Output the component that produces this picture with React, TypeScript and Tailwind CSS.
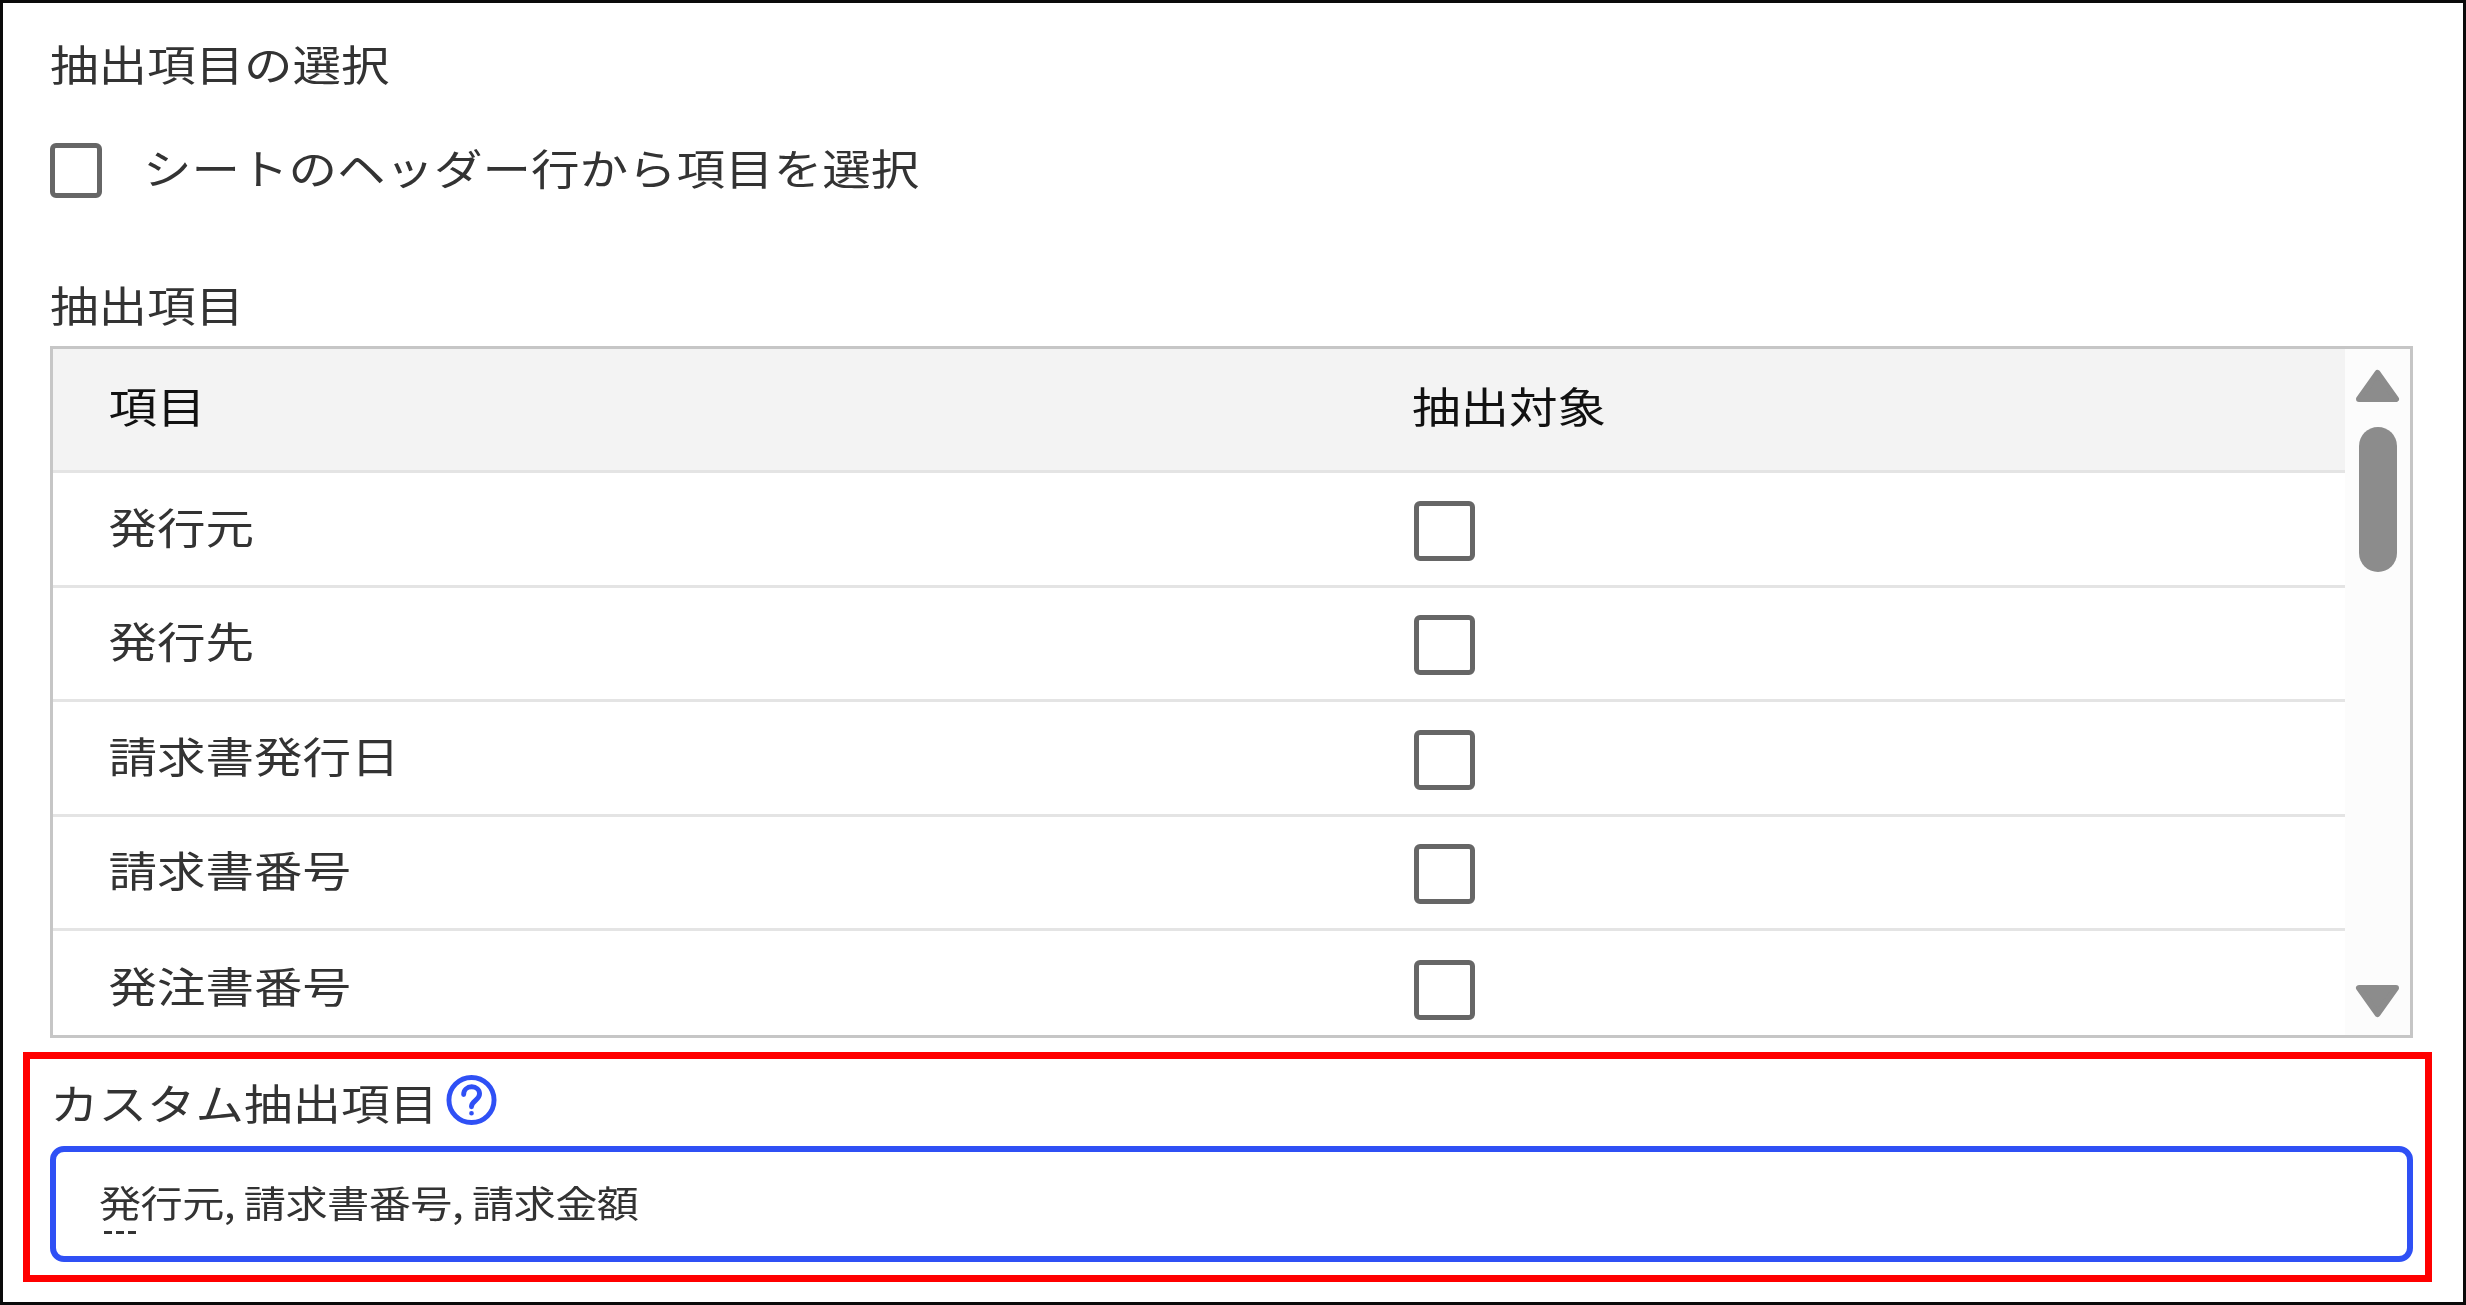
import React from 'react';

const rows = ['発行元', '発行先', '請求書発行日', '請求書番号', '発注書番号'];

const Label: React.FC<{ children: React.ReactNode; className?: string }> = ({ children, className = '' }) => (
  <span className={`inline-block origin-left scale-x-[1.155] whitespace-nowrap text-[42px] leading-[60px] blur-[0.4px] ${className}`}>
    {children}
  </span>
);

const Box: React.FC<{ className?: string }> = ({ className = '' }) => (
  <div className={`rounded-[6px] border-[5px] border-[#666666] bg-white ${className}`} />
);

const App: React.FC = () => {
  return (
    <div className="flex h-[1305px] w-[2466px] flex-col border-[3px] border-[#0a0a0a] bg-white pl-[47px] pr-[50px] pt-[30px] font-['Noto_Sans_CJK_JP','Noto_Sans',sans-serif] text-[#333333]">
      <Label className="self-start">抽出項目の選択</Label>

      <div className="mt-[49px] flex h-[56px] items-center">
        <Box className="h-[55px] w-[52px] shrink-0" />
        <Label className="ml-[41px] -translate-y-[3px]">シートのヘッダー行から項目を選択</Label>
      </div>

      <Label className="mt-[76px] self-start">抽出項目</Label>

      <div className="mt-[12px] flex h-[692px] overflow-hidden border-[3px] border-[#c6c6c6]">
        <div className="min-w-0 flex-1">
          <div className="grid h-[124px] grid-cols-[1359px_1fr] items-center border-b-[3px] border-[#e4e4e4] bg-[#f3f3f3] text-[#111111]">
            <Label className="justify-self-start -translate-y-[5px] pl-[48px]">項目</Label>
            <Label className="justify-self-start -translate-y-[5px]">抽出対象</Label>
          </div>
          {rows.map((row) => (
            <div
              key={row}
              className="grid h-[114.5px] grid-cols-[1359px_1fr] items-center border-b-[3px] border-[#e4e4e4] last:border-b-0"
            >
              <Label className="justify-self-start -translate-y-[3px] pl-[48px]">{row}</Label>
              <Box className="ml-[2px] mt-[4px] h-[60px] w-[61px]" />
            </div>
          ))}
        </div>

        <div className="flex w-[65px] shrink-0 flex-col items-center bg-[#fcfcfc] pb-[17px] pt-[20px]">
          <svg viewBox="0 0 45 34" className="h-[34px] w-[45px]" fill="#8c8c8c" stroke="#8c8c8c" strokeWidth="6" strokeLinejoin="round">
            <polygon points="22.5,4 41,30 4,30" />
          </svg>
          <div className="mt-[24px] h-[145px] w-[38px] rounded-full bg-[#8c8c8c]" />
          <svg viewBox="0 0 45 34" className="mt-auto h-[34px] w-[45px]" fill="#8c8c8c" stroke="#8c8c8c" strokeWidth="6" strokeLinejoin="round">
            <polygon points="4,4 41,4 22.5,30" />
          </svg>
        </div>
      </div>

      <div className="-ml-[27px] -mr-[19px] mt-[14px] h-[230px] border-[7px] border-[#ff0000] pl-[20px] pr-[12px] pt-[11px]">
        <div className="flex h-[60px] items-center">
          <Label className="w-[396px] shrink-0 translate-y-[2px]">カスタム抽出項目</Label>
          <svg viewBox="0 0 52 52" className="h-[52px] w-[51px] shrink-0" fill="none" stroke="#2f50f5" strokeWidth="5" strokeLinecap="round">
            <circle cx="26" cy="26" r="23" />
            <path d="M18 20.5c0-4.8 3.600-8 8.200-8s8 3 8 7.200c0 6.800-8.200 6.800-8.200 13.300" />
            <circle cx="26" cy="39.500" r="1.400" fill="#2f50f5" strokeWidth="2" />
          </svg>
        </div>
        <div className="relative mt-[16px] flex h-[116px] items-center rounded-[14px] border-[6px] border-[#2f50f5] bg-white pl-[43px]">
          <span className="inline-block origin-left -translate-y-[2px] scale-x-[1.14] whitespace-nowrap text-[37px] leading-[50px] tracking-[-0.5px] blur-[0.4px]">
            発行元, 請求書番号, 請求金額
          </span>
          <div className="absolute left-[48px] top-[79px] flex gap-[4px]">
            {[0, 1, 2].map((dot) => (
              <span key={dot} className="h-[3px] w-[8px] bg-[#333333]" />
            ))}
          </div>
        </div>
      </div>
    </div>
  );
};

export default App;
